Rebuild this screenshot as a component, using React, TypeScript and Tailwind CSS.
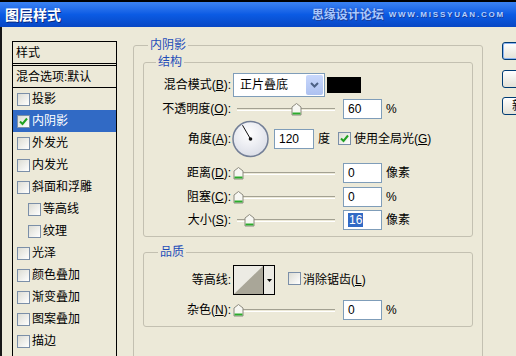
import React from 'react'

type CheckProps = { checked?: boolean }

const Check: React.FC<CheckProps> = ({ checked }) => (
  <span className="inline-flex h-[13px] w-[13px] shrink-0 items-center justify-center border border-[#7b8fa8] bg-gradient-to-br from-[#dcdcd4] to-white">
    {checked && (
      <svg width="9" height="9" viewBox="0 0 9 9">
        <path d="M1 4.5 L3.5 7 L8 1.5" fill="none" stroke="#21a121" strokeWidth="2" />
      </svg>
    )}
  </span>
)

const Slider: React.FC<{ pos: number }> = ({ pos }) => (
  <div className="relative h-[20px] w-[98px] shrink-0">
    <div className="absolute left-0 right-0 top-[9px] h-[3px] border-t border-[#a3a192] border-b border-b-white" />
    <svg className="absolute top-[4px]" style={{ left: pos - 5 }} width="11" height="13" viewBox="0 0 11 13">
      <path d="M1 4 L5.5 0.5 L10 4 L10 12 L1 12 Z" fill="#f7f7f2" stroke="#8c8a7e" />
      <path d="M1.5 9.5 H9.5 V11.5 H1.5 Z" fill="#2cab2c" />
    </svg>
  </div>
)

const Field: React.FC<{ value: string; selected?: boolean; w?: string }> = ({ value, selected, w = 'w-[39px]' }) => (
  <div className={`${w} flex h-[20px] shrink-0 items-center border border-[#7f9db9] bg-white pl-[4px]`}>
    <span className={selected ? 'bg-[#316ac5] px-[1px] text-white' : ''}>{value}</span>
  </div>
)

const Label: React.FC<{ text: string; k: string }> = ({ text, k }) => (
  <span className="w-[87px] shrink-0 text-right">
    {text}(<span className="underline">{k}</span>):
  </span>
)

const listItems = [
  { name: '投影' },
  { name: '内阴影', checked: true, active: true },
  { name: '外发光' },
  { name: '内发光' },
  { name: '斜面和浮雕' },
  { name: '等高线', indent: true },
  { name: '纹理', indent: true },
  { name: '光泽' },
  { name: '颜色叠加' },
  { name: '渐变叠加' },
  { name: '图案叠加' },
  { name: '描边' },
]

export default function App() {
  return (
    <div className="h-[356px] w-[516px] overflow-hidden bg-[#ece9d8] font-['Liberation_Sans','Noto_Sans_CJK_SC',sans-serif] text-[12px] leading-[14px] text-black">
      {/* title bar */}
      <div className="flex h-[27px] items-center justify-between border-t-2 border-black bg-gradient-to-b from-[#3b82f2] via-[#0b5be4] to-[#0847c4] pl-[5px] pr-[11px]">
        <span className="text-[14px] font-bold text-white [text-shadow:1px_1px_0_#0a2a80]">图层样式</span>
        <div className="flex items-center gap-[5px]">
          <span className="text-[12px] font-bold text-[#a9c8ff] [text-shadow:0_0_1px_#1d3f9a,1px_1px_0_#1d3f9a]">思缘设计论坛</span>
          <span className="whitespace-nowrap text-[8px] font-bold tracking-[1.8px] text-[#b5d0ff] [text-shadow:1px_1px_0_#1d3f9a]">
            WWW.MISSYUAN.COM
          </span>
        </div>
      </div>

      <div className="flex h-[329px] border-l-2 border-[#161616]">
        {/* style list */}
        <div className="ml-[10px] mt-[14px] h-[330px] w-[105px] shrink-0 border border-black">
          <div className="flex h-[22px] items-center border-b border-black pl-[3px]">样式</div>
          <div className="mt-[1px] h-[1px] bg-black" />
          <div className="flex h-[22px] items-center border-b border-black pl-[3px]">混合选项:默认</div>
          {listItems.map((item, i) => (
            <div
              key={i}
              className={`flex h-[22px] items-center gap-[2px] ${item.indent ? 'pl-[15px]' : 'pl-[4px]'} ${
                item.active ? 'bg-[#316ac5] text-white' : ''
              }`}
            >
              <Check checked={item.checked} />
              <span>{item.name}</span>
            </div>
          ))}
        </div>

        {/* settings */}
        <fieldset className="ml-[16px] mt-[11px] h-[340px] w-[350px] shrink-0 rounded-[3px] border border-[#c3c0b1] px-[9px] pt-[3px]">
          <legend className="ml-[5px] px-[2px] leading-[14px] text-[#1f4db8]">内阴影</legend>

          <fieldset className="rounded-[3px] border border-[#c3c0b1] pb-[6px]">
            <legend className="ml-[12px] px-[2px] leading-[14px] text-[#1f4db8]">结构</legend>

            <div className="mt-[4px] flex h-[24px] items-center">
              <Label text="混合模式" k="B" />
              <div className="ml-[2px] flex h-[24px] w-[92px] items-center border border-[#7f9db9] bg-white">
                <span className="flex-1 pl-[6px]">正片叠底</span>
                <span className="mr-[1px] flex h-[20px] w-[17px] items-center justify-center rounded-[2px] bg-gradient-to-b from-[#c9d8fc] to-[#adc1f0]">
                  <svg width="9" height="6" viewBox="0 0 9 6">
                    <path d="M1 1 L4.5 4.5 L8 1" fill="none" stroke="#4d6185" strokeWidth="2" />
                  </svg>
                </span>
              </div>
              <div className="ml-[2px] h-[16px] w-[34px] bg-black" />
            </div>

            <div className="mt-[2px] flex h-[20px] items-center">
              <Label text="不透明度" k="O" />
              <div className="ml-[6px]">
                <Slider pos={59} />
              </div>
              <div className="ml-[8px]">
                <Field value="60" />
              </div>
              <span className="ml-[4px]">%</span>
            </div>

            <div className="mt-[1px] flex h-[38px] items-center">
              <Label text="角度" k="A" />
              <svg className="ml-[1px] shrink-0" width="37" height="38" viewBox="0 0 37 38">
                <defs>
                  <radialGradient id="dial" cx="0.45" cy="0.35" r="0.7">
                    <stop offset="0" stopColor="#ffffff" />
                    <stop offset="1" stopColor="#d9dce6" />
                  </radialGradient>
                </defs>
                <circle cx="18.5" cy="19" r="17.5" fill="url(#dial)" stroke="#737f96" strokeWidth="1.5" />
                <line x1="18.5" y1="19" x2="10.5" y2="5.2" stroke="#111" strokeWidth="1" />
                <circle cx="18.5" cy="19" r="1.8" fill="#111" />
              </svg>
              <div className="ml-[5px]">
                <Field value="120" w="w-[40px]" />
              </div>
              <span className="ml-[4px]">度</span>
              <span className="ml-[8px]">
                <Check checked />
              </span>
              <span className="ml-[3px]">
                使用全局光(<span className="underline">G</span>)
              </span>
            </div>

            <div className="mt-[5px] flex h-[20px] items-center">
              <Label text="距离" k="D" />
              <div className="ml-[6px]">
                <Slider pos={1} />
              </div>
              <div className="ml-[8px]">
                <Field value="0" />
              </div>
              <span className="ml-[4px]">像素</span>
            </div>

            <div className="mt-[4px] flex h-[20px] items-center">
              <Label text="阻塞" k="C" />
              <div className="ml-[6px]">
                <Slider pos={1} />
              </div>
              <div className="ml-[8px]">
                <Field value="0" />
              </div>
              <span className="ml-[4px]">%</span>
            </div>

            <div className="mt-[3px] flex h-[20px] items-center">
              <Label text="大小" k="S" />
              <div className="ml-[6px]">
                <Slider pos={12} />
              </div>
              <div className="ml-[8px]">
                <Field value="16" selected />
              </div>
              <span className="ml-[4px]">像素</span>
            </div>
          </fieldset>

          <fieldset className="mt-[8px] rounded-[3px] border border-[#c3c0b1] pb-[6px]">
            <legend className="ml-[14px] px-[2px] leading-[14px] text-[#1f4db8]">品质</legend>

            <div className="mt-[6px] flex h-[30px] items-center">
              <span className="w-[87px] shrink-0 text-right">等高线:</span>
              <div className="ml-[2px] flex h-[30px] w-[42px] shrink-0 border border-black">
                <svg width="29" height="28" viewBox="0 0 29 28">
                  <rect width="29" height="28" fill="#ecebe4" />
                  <polygon points="0,28 29,0 29,28" fill="#a9a698" />
                </svg>
                <div className="flex flex-1 items-center justify-center border-l border-black bg-[#ecebe4]">
                  <svg width="5" height="3" viewBox="0 0 5 3">
                    <path d="M0 0 H5 L2.5 3 Z" fill="#000" />
                  </svg>
                </div>
              </div>
              <span className="ml-[13px]">
                <Check />
              </span>
              <span className="ml-[2px]">
                消除锯齿(<span className="underline">L</span>)
              </span>
            </div>

            <div className="mt-[5px] flex h-[20px] items-center">
              <Label text="杂色" k="N" />
              <div className="ml-[6px]">
                <Slider pos={1} />
              </div>
              <div className="ml-[8px]">
                <Field value="0" />
              </div>
              <span className="ml-[4px]">%</span>
            </div>
          </fieldset>
        </fieldset>

        {/* buttons, mostly cut off by the window edge */}
        <div className="ml-[19px] mt-[15px] flex w-[96px] shrink-0 flex-col">
          <div className="h-[18px] rounded-[3px] border border-[#003c74] bg-gradient-to-b from-white to-[#e3e1d6] shadow-[inset_0_0_0_1px_#8cb4f2]" />
          <div className="mt-[10px] h-[18px] rounded-[3px] border border-[#003c74] bg-gradient-to-b from-white to-[#e3e1d6]" />
          <div className="mt-[9px] flex h-[18px] items-center whitespace-nowrap rounded-[3px] border border-[#003c74] bg-gradient-to-b from-white to-[#e3e1d6] pl-[9px]">
            新建样式(W)...
          </div>
        </div>
      </div>
    </div>
  )
}
